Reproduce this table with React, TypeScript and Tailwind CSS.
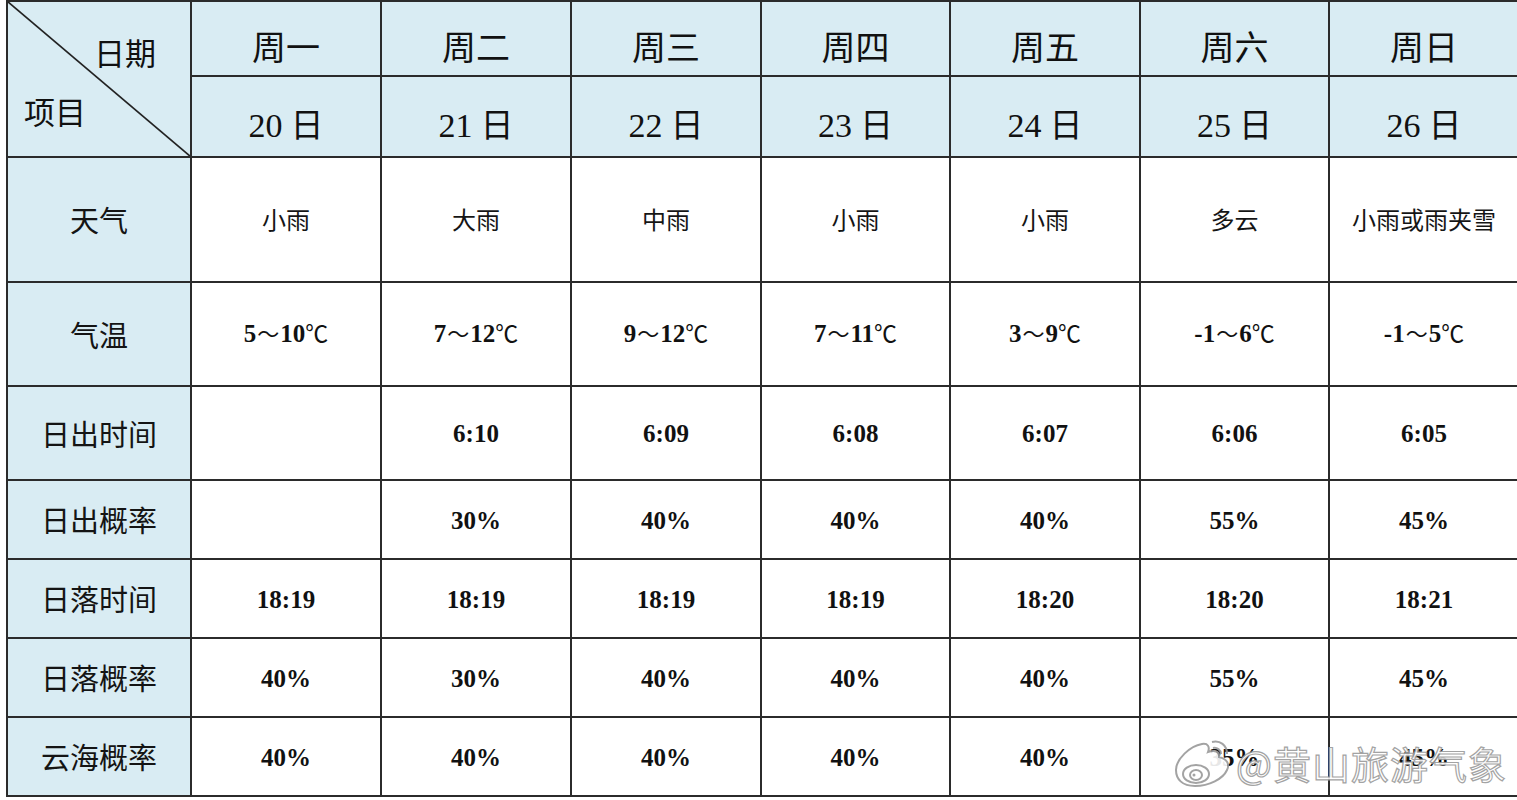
import React from "react";

const CJK = "font-['Noto_Sans_CJK_SC','Noto_Sans_CJK_JP',sans-serif]";
const SERIF = "font-['Liberation_Serif','Noto_Sans_CJK_SC',serif]";

const days = [
  ["周一", "20"],
  ["周二", "21"],
  ["周三", "22"],
  ["周四", "23"],
  ["周五", "24"],
  ["周六", "25"],
  ["周日", "26"],
];

const colW = ["w-[182px]", "w-[188px]", "w-[188px]", "w-[188px]", "w-[187px]", "w-[188px]", "w-[187px]", "w-[188px]"];

type Row = { label: string; h: string; kind: "cjk" | "num" | "temp"; vals: string[] };

const rows: Row[] = [
  { label: "天气", h: "h-[123px]", kind: "cjk", vals: ["小雨", "大雨", "中雨", "小雨", "小雨", "多云", "小雨或雨夹雪"] },
  { label: "气温", h: "h-[102px]", kind: "temp", vals: ["5|10", "7|12", "9|12", "7|11", "3|9", "-1|6", "-1|5"] },
  { label: "日出时间", h: "h-[92px]", kind: "num", vals: ["", "6:10", "6:09", "6:08", "6:07", "6:06", "6:05"] },
  { label: "日出概率", h: "h-[77px]", kind: "num", vals: ["", "30%", "40%", "40%", "40%", "55%", "45%"] },
  { label: "日落时间", h: "h-[77px]", kind: "num", vals: ["18:19", "18:19", "18:19", "18:19", "18:20", "18:20", "18:21"] },
  { label: "日落概率", h: "h-[77px]", kind: "num", vals: ["40%", "30%", "40%", "40%", "40%", "55%", "45%"] },
  { label: "云海概率", h: "h-[77px]", kind: "num", vals: ["40%", "40%", "40%", "40%", "40%", "35%", "45%"] },
];

function Value({ kind, v }: { kind: Row["kind"]; v: string }) {
  if (!v) return null;
  if (kind === "cjk") return <span className={`${CJK} text-[24px] text-[#151515] -mt-[2px]`}>{v}</span>;
  if (kind === "num") return <span className={`${SERIF} font-bold text-[25px] text-[#111] mt-[2px]`}>{v}</span>;
  const [a, b] = v.split("|");
  return (
    <span className="flex items-baseline text-[#111]">
      <span className={`${SERIF} font-bold text-[25px]`}>{a}</span>
      <span className={`${CJK} text-[22px] mx-[1px]`}>～</span>
      <span className={`${SERIF} font-bold text-[25px]`}>{b}</span>
      <span className={`${CJK} text-[23px]`}>℃</span>
    </span>
  );
}

function WeiboLogo() {
  return (
    <svg width="64" height="54" viewBox="0 0 64 54">
      <g fill="white" stroke="#9a9a9a" strokeWidth="2">
        <path d="M8 34c0-11 14-24 26-26 6-1 8 3 6 8 6-2 12-1 11 5 8 2 11 7 8 13-4 9-18 16-32 16C14 50 8 43 8 34z" />
        <ellipse cx="28" cy="38" rx="13" ry="9" />
        <ellipse cx="28" cy="39" rx="6" ry="5" />
        <path d="M44 6c8-2 15 3 15 12" fill="none" />
        <path d="M45 12c4-1 8 2 8 6" fill="none" />
      </g>
      <circle cx="26" cy="39" r="1.5" fill="#9a9a9a" />
    </svg>
  );
}

export default function App() {
  return (
    <div className="relative w-[1517px] h-[800px] overflow-hidden bg-white">
      <div className="ml-[6px] w-max bg-[#2b2b2b] p-[2px] pr-0 flex flex-col gap-[2px]">
        {/* header */}
        <div className="flex gap-[2px]">
          <div className={`relative ${colW[0]} h-[154px] bg-[#d9ecf3]`}>
            <svg className="absolute inset-0 w-full h-full" viewBox="0 0 182 154" preserveAspectRatio="none">
              <line x1="-1" y1="-1" x2="183" y2="155" stroke="#222" strokeWidth="1.6" />
            </svg>
            <span className={`absolute left-[86px] top-[34px] ${CJK} text-[31px] leading-none text-[#111]`}>日期</span>
            <span className={`absolute left-[16px] top-[93px] ${CJK} text-[31px] leading-none text-[#111]`}>项目</span>
          </div>
          {days.map(([w, d], i) => (
            <div key={w} className={`flex flex-col gap-[2px] ${colW[i + 1]}`}>
              <div className="h-[73px] bg-[#d9ecf3] flex items-center justify-center pt-[14px]">
                <span className={`${CJK} text-[34px] leading-none text-[#111]`}>{w}</span>
              </div>
              <div className="h-[79px] bg-[#d9ecf3] flex items-center justify-center pt-[16px]">
                <span className="flex items-baseline gap-[8px] text-[#111]">
                  <span className={`${SERIF} text-[34px] leading-none`}>{d}</span>
                  <span className={`${CJK} text-[33px] leading-none`}>日</span>
                </span>
              </div>
            </div>
          ))}
        </div>
        {rows.map((r) => (
          <div key={r.label} className={`flex gap-[2px] ${r.h}`}>
            <div className={`${colW[0]} bg-[#d9ecf3] flex items-center justify-center`}>
              <span className={`${CJK} text-[29px] leading-none text-[#141414]`}>{r.label}</span>
            </div>
            {r.vals.map((v, i) => (
              <div key={i} className={`${colW[i + 1]} bg-white flex items-center justify-center`}>
                <Value kind={r.kind} v={v} />
              </div>
            ))}
          </div>
        ))}
      </div>
      {/* watermark overlay */}
      <div className="absolute left-[1168px] top-[736px] flex items-center gap-[4px] opacity-90">
        <WeiboLogo />
        <span
          className={`${CJK} text-[38px] leading-none text-white [-webkit-text-stroke:1.2px_#9a9a9a] tracking-[1px]`}
        >
          @黄山旅游气象
        </span>
      </div>
    </div>
  );
}
